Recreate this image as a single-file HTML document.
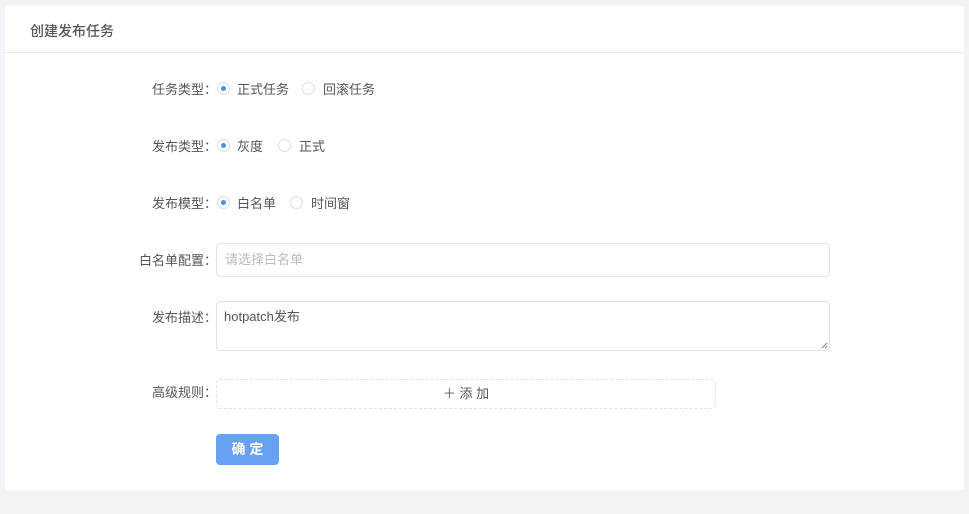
<!DOCTYPE html>
<html><head><meta charset="utf-8"><style>
*{box-sizing:border-box;margin:0;padding:0}
body{width:969px;height:514px;background:#f3f4f8;font-family:"Liberation Sans","Noto Sans CJK SC",sans-serif;font-size:13px;color:#555;position:relative;overflow:hidden}
.card{position:absolute;left:5px;top:6px;width:959px;height:484px;background:#fff}
.hd{height:47px;border-bottom:1px solid #e8e8e8;padding-left:25px;padding-top:2px;line-height:47px;font-size:14px;color:#555;font-weight:500}
.lbl{position:absolute;right:747px;width:120px;text-align:right;color:#555}
.a{position:absolute}
.r{position:absolute;width:13px;height:13px;border:1px solid #ddd;border-radius:50%}
.r.on::after{content:"";position:absolute;left:3px;top:3px;width:5px;height:5px;border-radius:50%;background:#4a90ee}
.t{position:absolute;color:#555}
.inp{position:absolute;left:211px;width:614px;border:1px solid #e2e2e2;border-radius:4px}
</style></head><body>
<div class="card">
<div class="hd">创建发布任务</div>
<div class="lbl" style="top:73px">任务类型：</div>
<div class="r on" style="left:212px;top:76px"></div><div class="t" style="left:232px;top:73px">正式任务</div>
<div class="r" style="left:297px;top:76px"></div><div class="t" style="left:318px;top:73px">回滚任务</div>
<div class="lbl" style="top:130px">发布类型：</div>
<div class="r on" style="left:212px;top:133px"></div><div class="t" style="left:232px;top:130px">灰度</div>
<div class="r" style="left:273px;top:133px"></div><div class="t" style="left:294px;top:130px">正式</div>
<div class="lbl" style="top:187px">发布模型：</div>
<div class="r on" style="left:212px;top:190px"></div><div class="t" style="left:232px;top:187px">白名单</div>
<div class="r" style="left:285px;top:190px"></div><div class="t" style="left:306px;top:187px">时间窗</div>
<div class="lbl" style="top:244px">白名单配置：</div>
<div class="inp" style="top:237px;height:34px;padding:5px 8px;color:#bbb">请选择白名单</div>
<div class="lbl" style="top:301px">发布描述：</div>
<div class="inp" style="top:295px;height:50px;padding:4px 7px;color:#555">hotpatch发布
<svg style="position:absolute;right:1px;bottom:1px" width="7" height="7"><path d="M6 1L1 6M6 4L4 6" stroke="#888" stroke-width="1"/></svg></div>
<div class="lbl" style="top:376px">高级规则：</div>
<div class="a" style="left:211px;top:373px;width:500px;height:30px;border:1px dashed #e2e2e2;border-radius:4px;text-align:center;line-height:28px;color:#555">＋ 添 加</div>
<div class="a" style="left:211px;top:428px;width:63px;height:31px;background:#66a1f2;border-radius:4px;color:#fff;font-weight:bold;text-align:center;line-height:31px;font-size:14px">确 定</div>
</div>
</body></html>
